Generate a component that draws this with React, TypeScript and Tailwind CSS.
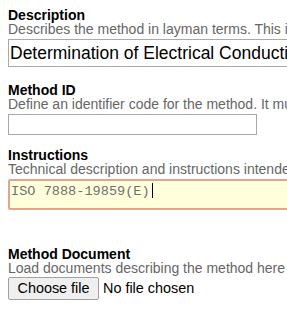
export default function App() {
  const label = "text-[14px] leading-[14px] font-bold text-black whitespace-nowrap";
  const help = "text-[14px] leading-[14px] text-[#666666] whitespace-nowrap";
  return (
    <div className="w-[287px] h-[310px] overflow-hidden bg-white font-['Liberation_Sans',Arial,sans-serif]">
      <div className="pl-2 pt-2 w-[500px]">
        <div>
          <div className={label}>Description</div>
          <div className={help}>Describes the method in layman terms. This information is made available to lab clients.</div>
          <div className="mt-[3px] h-[28px] w-[400px] border border-[#a9a9a9] text-[17.5px] leading-normal text-black whitespace-nowrap overflow-hidden pl-[1px]">
            Determination of Electrical Conductivity
          </div>
        </div>
        <div className="mt-[16px]">
          <div className={label}>Method ID</div>
          <div className={help}>Define an identifier code for the method. It must be unique.</div>
          <div className="mt-[3px] h-[21px] w-[249px] border border-[#a9a9a9]" />
        </div>
        <div className="mt-[13px]">
          <div className={label}>Instructions</div>
          <div className={help}>Technical description and instructions intended for analysts</div>
          <div className="mt-[3px] h-[31px] w-[400px] border-2 border-[#e4a48c] rounded-[2px] bg-[#ffffdc] pt-[1px] pl-[1px] flex items-start">
            <span className="font-['Liberation_Mono','Courier_New',monospace] text-[13.6px] leading-normal text-[#707070] whitespace-nowrap">ISO 7888-19859(E)</span>
            <span className="inline-block w-px h-[15px] bg-black mt-[1px] ml-[2px]" />
          </div>
        </div>
        <div className="mt-[37px]">
          <div className={label}>Method Document</div>
          <div className={help}>Load documents describing the method here</div>
          <div className="mt-[2px] flex items-center">
            <div className="w-[91px] h-[23px] border border-[#a0a0a0] rounded-[2px] bg-[#efefef] flex items-center justify-center text-[14.4px] text-black whitespace-nowrap">
              Choose file
            </div>
            <span className="ml-[4px] text-[14.4px] text-black whitespace-nowrap">No file chosen</span>
          </div>
        </div>
      </div>
    </div>
  );
}
